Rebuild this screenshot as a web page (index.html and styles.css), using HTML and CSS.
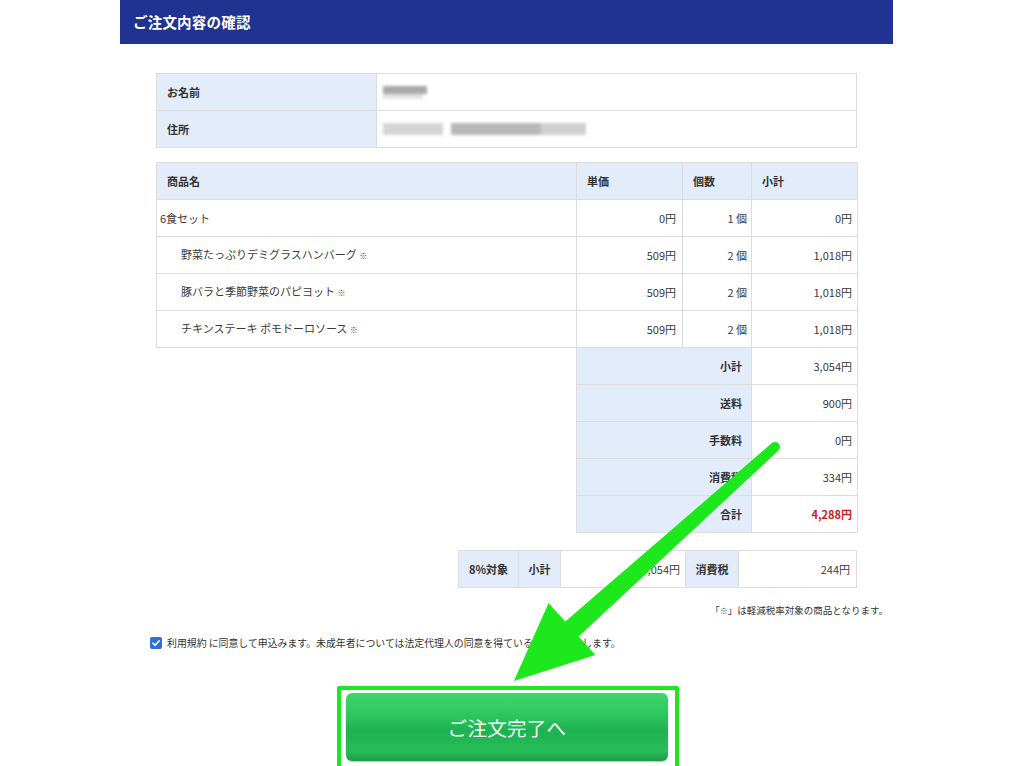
FILE: index.html
```html
<!DOCTYPE html>
<html lang="ja">
<head>
<meta charset="utf-8">
<title>ご注文内容の確認</title>
<link rel="stylesheet" href="styles.css">
</head>
<body>
<div class="page">
  <header class="bar"><h1 class="bar-title">ご注文内容の確認</h1></header>

  <div class="content">
    <table class="tbl customer">
      <colgroup><col class="c-label"><col></colgroup>
      <tr><th class="lbl">お名前</th><td><span class="blur blur-name"><i class="b1"></i><i class="b2"></i></span></td></tr>
      <tr><th class="lbl">住所</th><td><span class="blur blur-addr"><i class="a1"></i><i class="a2"></i><i class="a3"></i></span></td></tr>
    </table>

    <table class="tbl items">
      <colgroup><col class="c-name"><col class="c-price"><col class="c-qty"><col class="c-sub"></colgroup>
      <tr class="head"><th class="lbl">商品名</th><th class="lbl">単価</th><th class="lbl">個数</th><th class="lbl">小計</th></tr>
      <tr><td class="name">6食セット</td><td class="num p-price">0円</td><td class="num p-qty">1 個</td><td class="num p-sub">0円</td></tr>
      <tr><td class="name sub">野菜たっぷりデミグラスハンバーグ <span class="mark">※</span></td><td class="num p-price">509円</td><td class="num p-qty">2 個</td><td class="num p-sub">1,018円</td></tr>
      <tr><td class="name sub">豚バラと季節野菜のパピヨット <span class="mark">※</span></td><td class="num p-price">509円</td><td class="num p-qty">2 個</td><td class="num p-sub">1,018円</td></tr>
      <tr><td class="name sub">チキンステーキ ポモドーロソース <span class="mark">※</span></td><td class="num p-price">509円</td><td class="num p-qty">2 個</td><td class="num p-sub">1,018円</td></tr>
      <tr><td class="empty"></td><th class="lbl sum-lbl" colspan="2">小計</th><td class="num p-sub">3,054円</td></tr>
      <tr><td class="empty"></td><th class="lbl sum-lbl" colspan="2">送料</th><td class="num p-sub">900円</td></tr>
      <tr><td class="empty"></td><th class="lbl sum-lbl" colspan="2">手数料</th><td class="num p-sub">0円</td></tr>
      <tr><td class="empty"></td><th class="lbl sum-lbl" colspan="2">消費税</th><td class="num p-sub">334円</td></tr>
      <tr><td class="empty"></td><th class="lbl sum-lbl" colspan="2">合計</th><td class="num p-sub total">4,288円</td></tr>
    </table>

    <table class="tbl tax">
      <colgroup><col class="t1"><col class="t2"><col class="t3"><col class="t4"><col class="t5"></colgroup>
      <tr><th class="lbl">8%対象</th><th class="lbl">小計</th><td class="num t-pad">3,054円</td><th class="lbl">消費税</th><td class="num t-pad2">244円</td></tr>
    </table>

    <p class="note">「<span class="mark">※</span>」は軽減税率対象の商品となります。</p>

    <label class="agree">
      <span class="check"><svg viewBox="0 0 12 12" width="12" height="12"><path d="M3 6.2 L5.2 8.3 L9.2 3.8" fill="none" stroke="#fff" stroke-width="1.6" stroke-linecap="round" stroke-linejoin="round"/></svg></span>
      <span class="agree-text">利用規約 に同意して申込みます。未成年者については法定代理人の同意を得ているものとみなします。</span>
    </label>

    <div class="frame">
      <button class="submit" type="button">ご注文完了へ</button>
    </div>
  </div>
</div>

<svg class="arrow" viewBox="0 0 1024 766" width="1024" height="766">
  <defs><filter id="soft" x="-5%" y="-5%" width="110%" height="110%"><feGaussianBlur stdDeviation="0.7"/></filter></defs>
  <g filter="url(#soft)">
    <polygon points="778.3,450.7 578.7,636.5 595.4,655 513.9,681 548.6,603 565.3,621.5 771.7,443.3" fill="#1de81d"/>
    <circle cx="775" cy="447" r="5" fill="#1de81d"/>
  </g>
</svg>
</body>
</html>
```

FILE: styles.css
```css
* { box-sizing: border-box; }
html, body { margin: 0; padding: 0; background: #fff; }
body {
  font-family: "Noto Sans CJK JP", "Noto Sans", sans-serif;
  color: #3a3a3a;
  width: 1024px;
  height: 766px;
  overflow: hidden;
  position: relative;
}
.page { width: 773px; margin-left: 120px; }
.bar {
  height: 44px;
  background: #213391;
  display: flex;
  align-items: center;
  padding-left: 13px;
}
.bar-title {
  margin: 0;
  color: #fff;
  font-size: 14.5px;
  font-weight: bold;
  line-height: 1;
  letter-spacing: 0.2px;
}
.content { padding: 29px 36px 0 36px; }

.tbl {
  width: 701px;
  border-collapse: collapse;
  table-layout: fixed;
  font-size: 11px;
}
.tbl th, .tbl td {
  border: 1px solid #dcdcdc;
  height: 37px;
  padding: 0 10px;
  line-height: 14px;
  vertical-align: middle;
  white-space: nowrap;
}
.tbl th.lbl {
  background: #e2ecfb;
  text-align: left;
  font-weight: bold;
  color: #333;
}
.c-label { width: 220px; }
.customer td { padding-left: 6px; }

.items { margin-top: 14px; }
.c-name { width: 420px; }
.c-price { width: 106px; }
.c-qty { width: 69px; }
.c-sub { width: 106px; }
.items td.name { padding-left: 3px; }
.items td.name.sub { padding-left: 24px; }
.mark { font-size: 8px; font-weight: bold; color: #444; }
.tbl td.num { text-align: right; }
.tbl td.p-price { padding-right: 6px; }
.tbl td.p-qty { padding-right: 4px; }
.tbl td.p-sub { padding-right: 5px; }
.items td.empty { border: none; background: #fff; }
.tbl th.sum-lbl { text-align: right; padding-right: 9px; }
.total { color: #d0181b; font-weight: bold; }

.tax { width: 398px; margin: 17px 0 0 auto; }
.tax th.lbl { padding: 0; text-align: center; }
.t1 { width: 60px; }
.t2 { width: 42px; }
.t3 { width: 125px; }
.t4 { width: 53px; }
.t5 { width: 118px; }
.tax td.t-pad { padding-right: 5px; }
.tax td.t-pad2 { padding-right: 6px; }

.note {
  margin: 15px -31px 0 0;
  text-align: right;
  font-size: 9.5px;
  line-height: 14px;
  color: #333;
}

.agree {
  display: flex;
  align-items: center;
  gap: 5px;
  margin: 18px 0 0 -6px;
  font-size: 9.9px;
  line-height: 14px;
  color: #333;
}
.check {
  width: 12px;
  height: 12px;
  border-radius: 2px;
  background: #2f6fd6;
  display: flex;
}

.frame {
  width: 342px;
  margin: 36px 0 0 181px;
  border: 4px solid #1de81d;
  border-radius: 2px;
  padding: 3px 7px 6px 5px;
}
.submit {
  display: block;
  width: 100%;
  height: 68px;
  border: none;
  border-radius: 6px;
  background: linear-gradient(to bottom, #3fd56c 0%, #2cc55d 35%, #1db152 55%, #27bd58 85%, #1c9e49 100%);
  box-shadow: 0 1px 1px rgba(0,0,0,0.25);
  color: #f4fff6;
  font-family: "Noto Sans CJK JP", "Noto Sans", sans-serif;
  font-size: 19.5px;
  letter-spacing: 0.3px;
}

.blur { display: flex; align-items: center; gap: 8px; filter: blur(1.6px); }
.blur i { display: block; height: 12px; background: #bdbdbd; }
.blur-name { flex-direction: column; align-items: flex-start; gap: 0; }
.blur-name .b1 { width: 44px; height: 8px; background: #a9a9a9; }
.blur-name .b2 { width: 40px; height: 5px; background: #e3e3e3; }
.blur-addr .a1 { width: 60px; background: #d4d4d4; }
.blur-addr .a2 { width: 90px; background: #b8b8b8; }
.blur-addr .a3 { width: 45px; background: #d0d0d0; margin-left: -8px; }

.arrow { position: absolute; left: 0; top: 0; pointer-events: none; }
```
